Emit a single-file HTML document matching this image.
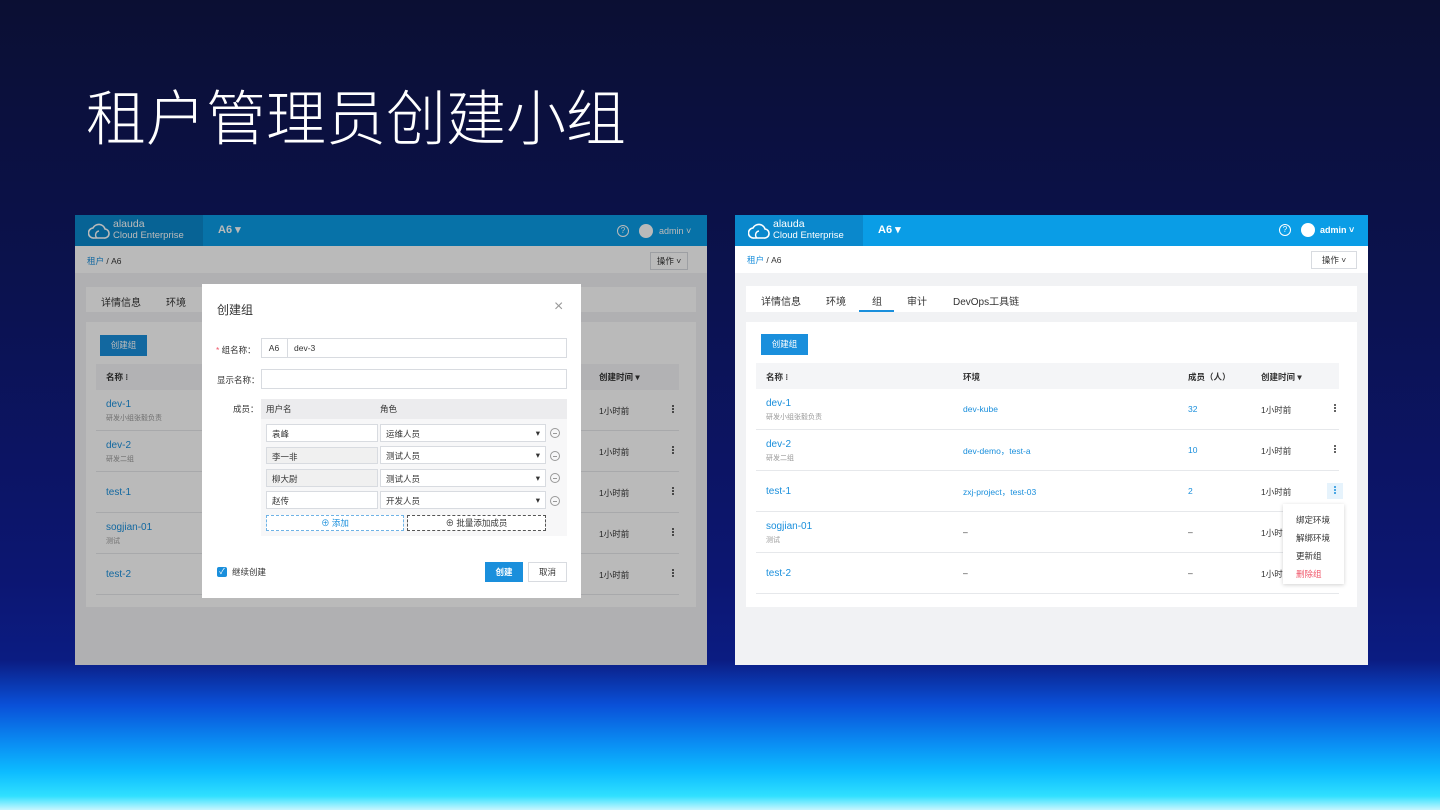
<!DOCTYPE html>
<html><head><meta charset="utf-8"><style>
*{margin:0;padding:0;box-sizing:border-box}
body{width:1440px;height:810px;overflow:hidden;position:relative;font-family:"Liberation Sans","Noto Sans CJK SC",sans-serif;
background:linear-gradient(to bottom,#0b0f33 0px,#0b1250 300px,#0c1672 580px,#0b1c82 660px,#0a50d8 705px,#0a90f4 745px,#0dbcff 772px,#30e0ff 796px,#c8f6ff 810px)}
.a{position:absolute;white-space:nowrap}
h1{position:absolute;left:86px;top:71px;font-size:60px;font-weight:300;color:#fff;font-family:"Liberation Sans","Noto Sans CJK SC",sans-serif}
.panel{position:absolute;top:215px;width:633px;height:450px;background:#f1f2f4;overflow:hidden;font-size:9px;color:#333}
.hdr{left:0;top:0;width:100%;height:31px;background:#0a9de6}
.logo{left:0;top:0;width:128px;height:31px;background:#0a88cc;color:#fff}
.blue{color:#1a8fdc}
.row{left:26px;width:583px;height:41px;border-bottom:1px solid #e6e8eb}
.k{width:2px;height:2px;background:#333;border-radius:1px;box-shadow:0 3px 0 #333,0 6px 0 #333}
.inp{background:#fff;border:1px solid #d8dbe0;height:19px;font-size:8.5px;padding:3px 5px;color:#333}
</style></head><body>
<h1>租户管理员创建小组</h1>

<!-- right panel -->
<div class="panel" style="left:735px">
 <div class="a hdr"></div>
 <div class="a logo">
  <svg class="a" style="left:13px;top:7px" width="22" height="18" viewBox="0 0 22 18"><path d="M6 16 A5 5 0 0 1 5 6 A6.5 6.5 0 0 1 17 7 A4.5 4.5 0 0 1 16 16 Z" fill="none" stroke="#fff" stroke-width="1.6"/><path d="M9 16 A4 4 0 0 1 11 9" fill="none" stroke="#fff" stroke-width="1.4"/></svg>
  <div class="a" style="left:38px;top:4px;font-size:10.5px;line-height:10px">alauda</div>
  <div class="a" style="left:38px;top:16px;font-size:9.5px;line-height:10px">Cloud Enterprise</div>
 </div>
 <div class="a" style="left:143px;top:8px;color:#fff;font-size:11px;font-weight:bold">A6 ▾</div>
 <div class="a" style="left:544px;top:9px;width:12px;height:12px;border:1px solid #fff;border-radius:50%;color:#fff;font-size:8px;text-align:center;line-height:10px">?</div>
 <div class="a" style="left:566px;top:8px;width:14px;height:14px;border-radius:50%;background:#fff"></div>
 <div class="a" style="left:585px;top:10px;color:#fff;font-size:9px;font-weight:bold">admin ˅</div>
 <div class="a" style="left:0;top:31px;width:100%;height:27px;background:#fff"></div>
 <div class="a" style="left:12px;top:39px;font-size:8.5px"><span class="blue">租户</span> / A6</div>
 <div class="a" style="left:576px;top:36px;width:46px;height:18px;border:1px solid #d8dbe0;background:#fff;font-size:8.5px;text-align:center;line-height:16px">操作 ˅</div>
 <div class="a" style="left:11px;top:71px;width:611px;height:26px;background:#fff"></div>
 <div class="a" style="left:26px;top:78px;font-size:10px;color:#333">详情信息</div>
 <div class="a" style="left:91px;top:78px;font-size:10px">环境</div>
 <div class="a" style="left:137px;top:78px;font-size:10px">组</div>
 <div class="a" style="left:124px;top:95px;width:35px;height:2px;background:#1a8fdc"></div>
 <div class="a" style="left:172px;top:78px;font-size:10px">审计</div>
 <div class="a" style="left:218px;top:78px;font-size:10px">DevOps工具链</div>
 <div class="a" style="left:11px;top:107px;width:611px;height:285px;background:#fff"></div>
 <div class="a" style="left:26px;top:119px;width:47px;height:21px;background:#1a8fdc;color:#fff;font-size:8.5px;text-align:center;line-height:21px">创建组</div>
 <div class="a" style="left:21px;top:148px;width:583px;height:26px;background:#f4f5f7"></div>
 <div class="a" style="left:31px;top:156px;font-size:8.5px;font-weight:bold">名称 ⁝</div>
 <div class="a" style="left:228px;top:156px;font-size:8.5px;font-weight:bold">环境</div>
 <div class="a" style="left:453px;top:156px;font-size:8.5px;font-weight:bold">成员（人）</div>
 <div class="a" style="left:526px;top:156px;font-size:8.5px;font-weight:bold">创建时间 ▾</div>
 <div class="a row" style="left:21px;top:174px"></div>
 <div class="a row" style="left:21px;top:215px"></div>
 <div class="a row" style="left:21px;top:256px"></div>
 <div class="a row" style="left:21px;top:297px"></div>
 <div class="a row" style="left:21px;top:338px"></div>
 <div class="a blue" style="left:31px;top:183px;font-size:10px">dev-1</div><div class="a" style="left:31px;top:197px;font-size:7px;color:#999">研发小组张毅负责</div>
 <div class="a blue" style="left:31px;top:224px;font-size:10px">dev-2</div><div class="a" style="left:31px;top:238px;font-size:7px;color:#999">研发二组</div>
 <div class="a blue" style="left:31px;top:271px;font-size:10px">test-1</div>
 <div class="a blue" style="left:31px;top:306px;font-size:10px">sogjian-01</div><div class="a" style="left:31px;top:320px;font-size:7px;color:#999">测试</div>
 <div class="a blue" style="left:31px;top:353px;font-size:10px">test-2</div>
 <div class="a blue" style="left:228px;top:189px;font-size:8.5px">dev-kube</div>
 <div class="a blue" style="left:228px;top:230px;font-size:8.5px">dev-demo，test-a</div>
 <div class="a blue" style="left:228px;top:271px;font-size:8.5px">zxj-project，test-03</div>
 <div class="a" style="left:228px;top:312px;font-size:8.5px">–</div>
 <div class="a" style="left:228px;top:353px;font-size:8.5px">–</div>
 <div class="a blue" style="left:453px;top:189px;font-size:8.5px">32</div>
 <div class="a blue" style="left:453px;top:230px;font-size:8.5px">10</div>
 <div class="a blue" style="left:453px;top:271px;font-size:8.5px">2</div>
 <div class="a" style="left:453px;top:312px;font-size:8.5px">–</div>
 <div class="a" style="left:453px;top:353px;font-size:8.5px">–</div>
 <div class="a" style="left:526px;top:189px;font-size:8.5px">1小时前</div>
 <div class="a" style="left:526px;top:230px;font-size:8.5px">1小时前</div>
 <div class="a" style="left:526px;top:271px;font-size:8.5px">1小时前</div>
 <div class="a" style="left:526px;top:312px;font-size:8.5px">1小时</div>
 <div class="a" style="left:526px;top:353px;font-size:8.5px">1小时</div>
 <div class="a k" style="left:599px;top:189px"></div>
 <div class="a k" style="left:599px;top:230px"></div>
 <div class="a" style="left:592px;top:268px;width:16px;height:16px;background:#e6f3fc"></div>
 <div class="a k" style="left:599px;top:271px;background:#1a8fdc;box-shadow:0 3px 0 #1a8fdc,0 6px 0 #1a8fdc"></div>
 <div class="a" style="left:548px;top:289px;width:61px;height:80px;background:#fff;box-shadow:0 1px 4px rgba(0,0,0,.18)"></div>
 <div class="a" style="left:561px;top:296px;font-size:8.5px;line-height:18px">绑定环境<br>解绑环境<br>更新组<br><span style="color:#f0566a">删除组</span></div>
</div>

<!-- left panel -->
<div class="panel" style="left:75px;width:632px">
 <div class="a hdr"></div>
 <div class="a logo">
  <svg class="a" style="left:13px;top:7px" width="22" height="18" viewBox="0 0 22 18"><path d="M6 16 A5 5 0 0 1 5 6 A6.5 6.5 0 0 1 17 7 A4.5 4.5 0 0 1 16 16 Z" fill="none" stroke="#fff" stroke-width="1.6"/><path d="M9 16 A4 4 0 0 1 11 9" fill="none" stroke="#fff" stroke-width="1.4"/></svg>
  <div class="a" style="left:38px;top:4px;font-size:10.5px;line-height:10px">alauda</div>
  <div class="a" style="left:38px;top:16px;font-size:9.5px;line-height:10px">Cloud Enterprise</div>
 </div>
 <div class="a" style="left:143px;top:8px;color:#fff;font-size:11px;font-weight:bold">A6 ▾</div>
 <div class="a" style="left:542px;top:10px;width:12px;height:12px;border:1px solid #fff;border-radius:50%;color:#fff;font-size:8px;text-align:center;line-height:10px">?</div>
 <div class="a" style="left:564px;top:9px;width:14px;height:14px;border-radius:50%;background:#fff"></div>
 <div class="a" style="left:584px;top:11px;color:#fff;font-size:9px">admin ˅</div>
 <div class="a" style="left:0;top:31px;width:100%;height:27px;background:#fff"></div>
 <div class="a" style="left:12px;top:40px;font-size:8.5px"><span class="blue">租户</span> / A6</div>
 <div class="a" style="left:575px;top:37px;width:38px;height:18px;border:1px solid #d8dbe0;background:#fff;font-size:8.5px;text-align:center;line-height:16px">操作 ˅</div>
 <div class="a" style="left:11px;top:72px;width:610px;height:25px;background:#fff"></div>
 <div class="a" style="left:26px;top:79px;font-size:10px">详情信息</div>
 <div class="a" style="left:91px;top:79px;font-size:10px">环境</div>
 <div class="a" style="left:11px;top:107px;width:610px;height:285px;background:#fff"></div>
 <div class="a" style="left:25px;top:120px;width:47px;height:21px;background:#1a8fdc;color:#fff;font-size:8.5px;text-align:center;line-height:21px">创建组</div>
 <div class="a" style="left:21px;top:149px;width:583px;height:26px;background:#f4f5f7"></div>
 <div class="a" style="left:31px;top:156px;font-size:8.5px;font-weight:bold">名称 ⁝</div>
 <div class="a" style="left:524px;top:156px;font-size:8.5px;font-weight:bold">创建时间 ▾</div>
 <div class="a row" style="left:21px;top:175px"></div>
 <div class="a row" style="left:21px;top:216px"></div>
 <div class="a row" style="left:21px;top:257px"></div>
 <div class="a row" style="left:21px;top:298px"></div>
 <div class="a row" style="left:21px;top:339px"></div>
 <div class="a blue" style="left:31px;top:184px;font-size:10px">dev-1</div><div class="a" style="left:31px;top:198px;font-size:7px;color:#999">研发小组张毅负责</div>
 <div class="a blue" style="left:31px;top:225px;font-size:10px">dev-2</div><div class="a" style="left:31px;top:239px;font-size:7px;color:#999">研发二组</div>
 <div class="a blue" style="left:31px;top:272px;font-size:10px">test-1</div>
 <div class="a blue" style="left:31px;top:307px;font-size:10px">sogjian-01</div><div class="a" style="left:31px;top:321px;font-size:7px;color:#999">测试</div>
 <div class="a blue" style="left:31px;top:354px;font-size:10px">test-2</div>
 <div class="a" style="left:524px;top:190px;font-size:8.5px">1小时前</div>
 <div class="a" style="left:524px;top:231px;font-size:8.5px">1小时前</div>
 <div class="a" style="left:524px;top:272px;font-size:8.5px">1小时前</div>
 <div class="a" style="left:524px;top:313px;font-size:8.5px">1小时前</div>
 <div class="a" style="left:524px;top:354px;font-size:8.5px">1小时前</div>
 <div class="a k" style="left:597px;top:190px"></div>
 <div class="a k" style="left:597px;top:231px"></div>
 <div class="a k" style="left:597px;top:272px"></div>
 <div class="a k" style="left:597px;top:313px"></div>
 <div class="a k" style="left:597px;top:354px"></div>
 <div class="a" style="left:0;top:0;width:100%;height:100%;background:rgba(0,0,0,.27)"></div>
 <!-- modal -->
 <div class="a" style="left:127px;top:69px;width:379px;height:314px;background:#fff">
  <div class="a" style="left:15px;top:17px;font-size:12px">创建组</div>
  <div class="a" style="left:352px;top:15px;font-size:16px;color:#999;line-height:16px">×</div>
  <div class="a" style="left:14px;top:60px;font-size:8.5px"><span style="color:#f0566a">*</span> 组名称：</div>
  <div class="a inp" style="left:59px;top:54px;width:306px;height:20px;padding:0"></div>
  <div class="a" style="left:59px;top:54px;width:27px;height:20px;border-right:1px solid #d8dbe0;font-size:8.5px;text-align:center;line-height:20px">A6</div>
  <div class="a" style="left:92px;top:54px;font-size:8.5px;line-height:20px">dev-3</div>
  <div class="a" style="left:15px;top:90px;font-size:8.5px">显示名称：</div>
  <div class="a inp" style="left:59px;top:85px;width:306px;height:20px"></div>
  <div class="a" style="left:31px;top:119px;font-size:8.5px">成员：</div>
  <div class="a" style="left:59px;top:115px;width:306px;height:137px;background:#f7f7f8"></div>
  <div class="a" style="left:59px;top:115px;width:306px;height:20px;background:#ececee"></div>
  <div class="a" style="left:64px;top:119px;font-size:8.5px">用户名</div>
  <div class="a" style="left:178px;top:119px;font-size:8.5px">角色</div>

  <div class="a inp" style="left:64px;top:140px;width:112px;height:18px">袁峰</div>
  <div class="a inp" style="left:178px;top:140px;width:166px;height:18px">运维人员<span style="float:right">▾</span></div>
  <div class="a inp" style="left:64px;top:163px;width:112px;height:17px;background:#f0f0f0">李一非</div>
  <div class="a inp" style="left:178px;top:162px;width:166px;height:18px">测试人员<span style="float:right">▾</span></div>
  <div class="a inp" style="left:64px;top:185px;width:112px;height:18px;background:#f0f0f0">柳大尉</div>
  <div class="a inp" style="left:178px;top:185px;width:166px;height:18px">测试人员<span style="float:right">▾</span></div>
  <div class="a inp" style="left:64px;top:207px;width:112px;height:18px">赵传</div>
  <div class="a inp" style="left:178px;top:207px;width:166px;height:18px">开发人员<span style="float:right">▾</span></div>
  <div class="a" style="left:348px;top:144px;width:10px;height:10px;border:1px solid #999;border-radius:50%"><div class="a" style="left:2px;top:3.5px;width:4px;height:1px;background:#999"></div></div>
  <div class="a" style="left:348px;top:167px;width:10px;height:10px;border:1px solid #999;border-radius:50%"><div class="a" style="left:2px;top:3.5px;width:4px;height:1px;background:#999"></div></div>
  <div class="a" style="left:348px;top:189px;width:10px;height:10px;border:1px solid #999;border-radius:50%"><div class="a" style="left:2px;top:3.5px;width:4px;height:1px;background:#999"></div></div>
  <div class="a" style="left:348px;top:212px;width:10px;height:10px;border:1px solid #999;border-radius:50%"><div class="a" style="left:2px;top:3.5px;width:4px;height:1px;background:#999"></div></div>
  <div class="a" style="left:64px;top:231px;width:138px;height:16px;border:1px dashed #6fb3e6;background:#fff;color:#1a8fdc;font-size:8.5px;text-align:center;line-height:14px">⊕ 添加</div>
  <div class="a" style="left:205px;top:231px;width:139px;height:16px;border:1px dashed #555;background:#fff;font-size:8.5px;text-align:center;line-height:14px">⊕ 批量添加成员</div>
  <div class="a" style="left:15px;top:283px;width:10px;height:10px;background:#1a8fdc;border-radius:2px;color:#fff;font-size:8px;line-height:10px;text-align:center">✓</div>
  <div class="a" style="left:30px;top:282px;font-size:8.5px">继续创建</div>
  <div class="a" style="left:283px;top:278px;width:38px;height:20px;background:#1a8fdc;color:#fff;font-size:8.5px;text-align:center;line-height:20px;font-weight:bold">创建</div>
  <div class="a" style="left:326px;top:278px;width:39px;height:20px;border:1px solid #d8dbe0;font-size:8.5px;text-align:center;line-height:18px">取消</div>
 </div>
</div>
</body></html>
